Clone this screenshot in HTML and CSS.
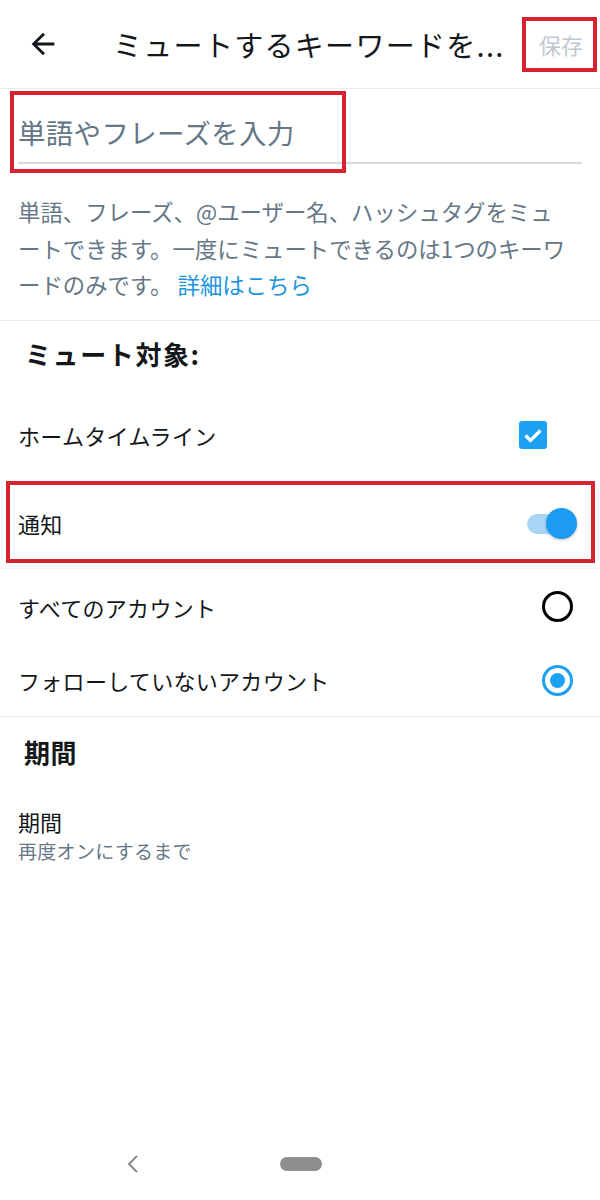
FILE: index.html
```html
<!DOCTYPE html>
<html lang="ja">
<head>
  <meta charset="UTF-8">
  <meta name="viewport" content="width=device-width, initial-scale=1.0">
  <title>ミュートするキーワードを追加</title>
  <link rel="stylesheet" href="styles.css">
</head>
<body>
  <div class="screen">
    <header class="app-bar">
      <button class="back" aria-label="戻る">
        <svg width="34" height="34" viewBox="0 0 24 24"><path d="M20 11H7.83l5.59-5.59L12 4l-8 8 8 8 1.41-1.41L7.83 13H20v-2z" fill="#14171a"/></svg>
      </button>
      <h1 class="title">ミュートするキーワードを...</h1>
      <button class="save">保存</button>
    </header>

    <div class="search">
      <div class="field">単語やフレーズを入力</div>
    </div>

    <p class="desc">単語、フレーズ、@ユーザー名、ハッシュタグをミュ<br>ートできます。一度にミュートできるのは1つのキーワ<br>ードのみです。 <a href="#" class="link">詳細はこちら</a></p>

    <section class="group">
      <h2 class="group-title">ミュート対象:</h2>
      <div class="row row-home">
        <span class="label">ホームタイムライン</span>
        <span class="checkbox">
          <svg width="28" height="28" viewBox="0 0 28 28"><rect width="28" height="28" rx="3" fill="#1da1f2"/><path d="M6.5 14.5l5 5 10-10" fill="none" stroke="#fff" stroke-width="3.2"/></svg>
        </span>
      </div>
      <div class="row row-notify">
        <span class="label">通知</span>
        <span class="toggle"><span class="track"></span><span class="thumb"></span></span>
      </div>
      <div class="row row-all">
        <span class="label">すべてのアカウント</span>
        <span class="radio"></span>
      </div>
      <div class="row row-follow">
        <span class="label">フォローしていないアカウント</span>
        <span class="radio radio-on"></span>
      </div>
    </section>

    <section class="group group-last">
      <h2 class="group-title period">期間</h2>
      <div class="item">
        <div class="item-label">期間</div>
        <div class="item-sub">再度オンにするまで</div>
      </div>
    </section>

    <nav class="nav-bar">
      <svg width="14" height="20" viewBox="0 0 14 20"><path d="M11 2L3 10l8 8" fill="none" stroke="#8a8a8a" stroke-width="2"/></svg>
      <span class="pill"></span>
    </nav>

    <!-- 注釈の赤枠 -->
    <div class="mark mark-save"></div>
    <div class="mark mark-field"></div>
    <div class="mark mark-notify"></div>
  </div>
</body>
</html>
```

FILE: styles.css
```css
body, html {
  margin: 0; padding: 0;
  font-family: "Noto Sans CJK JP", "Noto Sans", sans-serif;
  background: #fff; color: #14171a;
  text-spacing-trim: space-all;
}
.screen {
  position: relative;
  width: 600px; min-height: 1200px;
  display: flex; flex-direction: column;
}
button {
  font: inherit; border: 0; background: none; padding: 0;
}

.app-bar {
  height: 88px;
  display: flex; align-items: center;
  border-bottom: 1px solid #e6ecf0;
}
.back {
  display: flex;
  margin-left: 26px;
}
.title {
  flex: 1;
  margin: 0 0 0 53px;
  font-size: 29px; font-weight: normal;
  letter-spacing: 1.3px;
  white-space: nowrap; overflow: hidden;
}
.save {
  margin-right: 17px;
  font-size: 22px;
  color: #bfc8d0;
}

.search { padding: 0 18px; }
.field {
  padding: 26px 0 13px;
  line-height: 34px;
  font-size: 27.5px;
  letter-spacing: 0.3px;
  color: #657786;
  border-bottom: 2px solid #d4dbe0;
}

.desc {
  margin: 0;
  padding: 29px 8px 17px 18px;
  font-size: 22.4px; line-height: 36.5px;
  white-space: nowrap;
  color: #657786;
  border-bottom: 1px solid #e6ecf0;
}
.link {
  color: #1b95e0; text-decoration: none;
}

.group-title {
  margin: 0;
  padding: 18px 25px 22px;
  font-size: 26px; line-height: 30px;
  letter-spacing: 1.6px;
  font-weight: bold;
}
.row {
  display: flex; align-items: center; justify-content: space-between;
  padding: 0 18px;
  font-size: 22px;
  letter-spacing: 0.3px;
}
.row-home { height: 88px; }
.row-notify { height: 89px; border-bottom: 1px solid #eef0f6; }
.row-all { height: 76px; }
.row-follow { height: 71px; }

.checkbox { display: flex; margin-right: 35px; }

.toggle {
  position: relative;
  width: 50px; height: 31px;
  margin-right: 5px;
}
.toggle .track {
  position: absolute;
  left: 0; top: 6px;
  width: 43px; height: 20px;
  border-radius: 10px;
  background: #a9d6f7;
}
.toggle .thumb {
  position: absolute;
  right: 0; top: 0;
  width: 31px; height: 31px;
  border-radius: 50%;
  background: #1d9bf0;
  box-shadow: 0 1px 3px rgba(0,0,0,0.25);
}

.radio {
  box-sizing: border-box;
  width: 31px; height: 31px;
  margin-right: 9px;
  border: 3px solid #000;
  border-radius: 50%;
}
.radio-on {
  border-color: #1da1f2;
  display: flex; align-items: center; justify-content: center;
}
.radio-on::after {
  content: "";
  width: 15px; height: 15px;
  border-radius: 50%;
  background: #1da1f2;
}

.group:first-of-type { border-bottom: 1px solid #e6ecf0; }
.period { padding: 19px 24px 0; line-height: 32px; letter-spacing: 0.5px; }
.item { padding: 38px 18px 0; }
.item-label { font-size: 22px; line-height: 30px; }
.item-sub { font-size: 19px; line-height: 30px; letter-spacing: 0.3px; color: #657786; }

.nav-bar {
  margin-top: auto;
  height: 72px;
  display: flex; align-items: center;
  padding-left: 126px;
  gap: 140px;
}
.pill {
  width: 42px; height: 14px;
  border-radius: 7px;
  background: #8e8e8e;
}

.mark {
  position: absolute;
  box-sizing: border-box;
  border: 4px solid #d6232f;
}
.mark-save { left: 522px; top: 17px; width: 75px; height: 55px; }
.mark-field { left: 10px; top: 91px; width: 336px; height: 82px; }
.mark-notify { left: 6px; top: 481px; width: 589px; height: 82px; }
```
